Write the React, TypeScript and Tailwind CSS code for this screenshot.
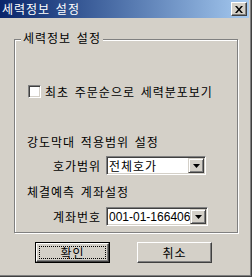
import React from "react";

function Arrow() {
  return (
    <svg width="7" height="4" viewBox="0 0 7 4">
      <path d="M0 0H7L3.5 4Z" fill="#000" />
    </svg>
  );
}

function Combo({ cls, text }: { cls: string; text: string }) {
  return (
    <div
      className={
        "h-[19px] bg-white border border-t-[#808080] border-l-[#808080] border-r-white border-b-white shadow-[inset_1px_1px_0_#404040,inset_-1px_-1px_0_#d4d0c8] flex items-center p-[1px] " +
        cls
      }
    >
      <span className="flex-1 pl-[1px] whitespace-nowrap leading-[14px]">{text}</span>
      <div className="w-[16px] h-[15px] bg-[#d4d0c8] border border-t-[#d4d0c8] border-l-[#d4d0c8] border-r-[#404040] border-b-[#404040] shadow-[inset_1px_1px_0_#fff,inset_-1px_-1px_0_#808080] flex items-center justify-center">
        <Arrow />
      </div>
    </div>
  );
}

export default function App() {
  return (
    <div className="w-[252px] h-[277px] bg-[#d4d0c8] font-['Noto_Sans_CJK_KR',sans-serif] text-[12px] leading-[12px] tracking-[1px] [word-spacing:2px] text-black border-r border-b border-[#404040] flex flex-col overflow-hidden">
      <div className="flex-1 border-r border-b border-[#808080] flex flex-col">
        <div className="h-[18px] mr-[1px] bg-linear-to-r from-[#0a246a] to-[#a6caf0] flex items-center justify-between pl-[2px] pr-[2px]">
          <span className="text-white">세력정보 설정</span>
          <div className="w-[16px] h-[14px] bg-[#d4d0c8] border border-t-white border-l-white border-r-[#404040] border-b-[#404040] shadow-[inset_-1px_-1px_0_#808080] flex items-center justify-center">
            <svg width="8" height="7" viewBox="0 0 8 7">
              <path d="M0 0H2L4 2.5L6 0H8L5 3.5L8 7H6L4 4.5L2 7H0L3 3.5Z" fill="#000" />
            </svg>
          </div>
        </div>

        <div className="relative mt-[21px] ml-[14px] w-[224px] h-[194px] border border-[#808080] shadow-[inset_1px_1px_0_#fff,1px_1px_0_#fff]">
          <span className="absolute left-[6px] top-[-8px] px-[2px] bg-[#d4d0c8] leading-[12px]">
            세력정보 설정
          </span>
          <div className="flex flex-col pl-[12px]">
            <div className="mt-[45px] h-[13px] flex items-center gap-[4px]">
              <div className="ml-[1px] w-[13px] h-[13px] shrink-0 bg-white border border-t-[#808080] border-l-[#808080] border-r-white border-b-white shadow-[inset_1px_1px_0_#404040,inset_-1px_-1px_0_#d4d0c8]" />
              <span className="whitespace-nowrap">최초 주문순으로 세력분포보기</span>
            </div>
            <div className="mt-[38px]">강도막대 적용범위 설정</div>
            <div className="mt-[8px] flex items-center pl-[26px]">
              <span className="w-[53px]">호가범위</span>
              <Combo cls="w-[100px]" text="전체호가" />
            </div>
            <div className="mt-[11px]">체결예측 계좌설정</div>
            <div className="mt-[9px] flex items-center pl-[26px]">
              <span className="w-[53px]">계좌번호</span>
              <Combo cls="w-[102px] font-['Liberation_Sans',sans-serif] tracking-normal" text="001-01-166406" />
            </div>
          </div>
        </div>

        <div className="mt-[9px] ml-[35px] flex gap-[27px]">
          <div className="w-[75px] h-[21px] border border-black">
            <div className="relative h-full border border-t-white border-l-white border-r-[#404040] border-b-[#404040] shadow-[inset_-1px_-1px_0_#808080] flex items-center justify-center">
              확인
              <div className="absolute inset-[2px] border border-dotted border-black" />
            </div>
          </div>
          <div className="w-[75px] h-[21px] border border-t-white border-l-white border-r-[#404040] border-b-[#404040] shadow-[inset_-1px_-1px_0_#808080] flex items-center justify-center">
            취소
          </div>
        </div>
      </div>
    </div>
  );
}
